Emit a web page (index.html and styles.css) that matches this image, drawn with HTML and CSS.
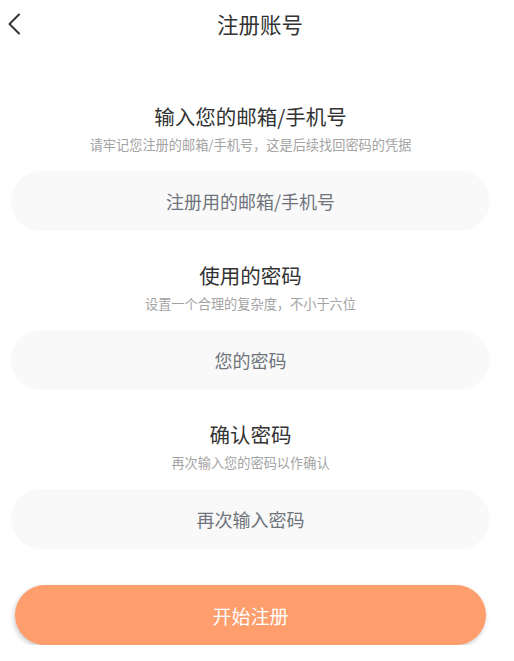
FILE: index.html
```html
<!DOCTYPE html>
<html lang="zh-CN">
<head>
<meta charset="utf-8">
<title>注册账号</title>
<link rel="stylesheet" href="styles.css">
</head>
<body>
<div class="page">
  <header class="topbar">
    <button class="back" aria-label="返回">
      <svg width="14" height="22" viewBox="0 0 14 22"><path d="M12 1.5 L2.5 11 L12 20.5" fill="none" stroke="#333" stroke-width="2" stroke-linecap="round" stroke-linejoin="round"/></svg>
    </button>
    <h1 class="topbar-title">注册账号</h1>
  </header>
  <main class="form">
    <section class="field">
      <h2 class="field-title">输入您的邮箱/手机号</h2>
      <p class="field-hint">请牢记您注册的邮箱/手机号，这是后续找回密码的凭据</p>
      <input class="field-input" type="text" placeholder="注册用的邮箱/手机号">
    </section>
    <section class="field">
      <h2 class="field-title">使用的密码</h2>
      <p class="field-hint">设置一个合理的复杂度，不小于六位</p>
      <input class="field-input" type="password" placeholder="您的密码">
    </section>
    <section class="field">
      <h2 class="field-title">确认密码</h2>
      <p class="field-hint">再次输入您的密码以作确认</p>
      <input class="field-input" type="password" placeholder="再次输入密码">
    </section>
    <button class="submit">开始注册</button>
  </main>
</div>
</body>
</html>
```
FILE: styles.css
```css
* { box-sizing: border-box; }
html, body { margin: 0; padding: 0; background: #fff; }
body {
  font-family: "Noto Sans CJK SC", "Noto Sans", sans-serif;
  color: #333;
}
.page { width: 514px; }
.topbar {
  position: relative;
  height: 48px;
  display: flex;
  align-items: center;
  justify-content: center;
  padding-left: 6px;
}
.back {
  position: absolute;
  left: 6px;
  top: 13px;
  width: 16px;
  height: 22px;
  padding: 0;
  border: 0;
  background: none;
  display: flex;
  align-items: center;
  justify-content: center;
}
.topbar-title {
  margin: 0;
  font-size: 21.5px;
  font-weight: 400;
  line-height: 30px;
  color: #333;
}
.form {
  padding: 54px 24px 0 11px;
  display: flex;
  flex-direction: column;
}
.field {
  display: flex;
  flex-direction: column;
  align-items: stretch;
  margin-bottom: 30px;
}
.field:last-of-type { margin-bottom: 0; }
.field-title {
  margin: 0;
  text-align: center;
  font-size: 20.5px;
  font-weight: 400;
  line-height: 28px;
  color: #333;
}
.field-hint {
  margin: 5px 0 0;
  text-align: center;
  font-size: 13.2px;
  line-height: 20px;
  color: #a3a3a3;
}
.field-input {
  margin-top: 16px;
  height: 60px;
  border: 0;
  border-radius: 30px;
  background: #f9f9f9;
  text-align: center;
  font-family: "Noto Sans CJK SC", "Noto Sans", sans-serif;
  font-size: 18px;
  color: #333;
  outline: none;
}
.field-input::placeholder { color: #6f747c; }
.submit {
  margin: 36px 4px 0;
  height: 60px;
  border: 0;
  border-radius: 30px;
  background: #ff9e6d;
  color: #fff;
  font-family: "Noto Sans CJK SC", "Noto Sans", sans-serif;
  font-size: 19px;
  box-shadow: -1px 2px 5px rgba(0, 0, 0, 0.22);
}
```
